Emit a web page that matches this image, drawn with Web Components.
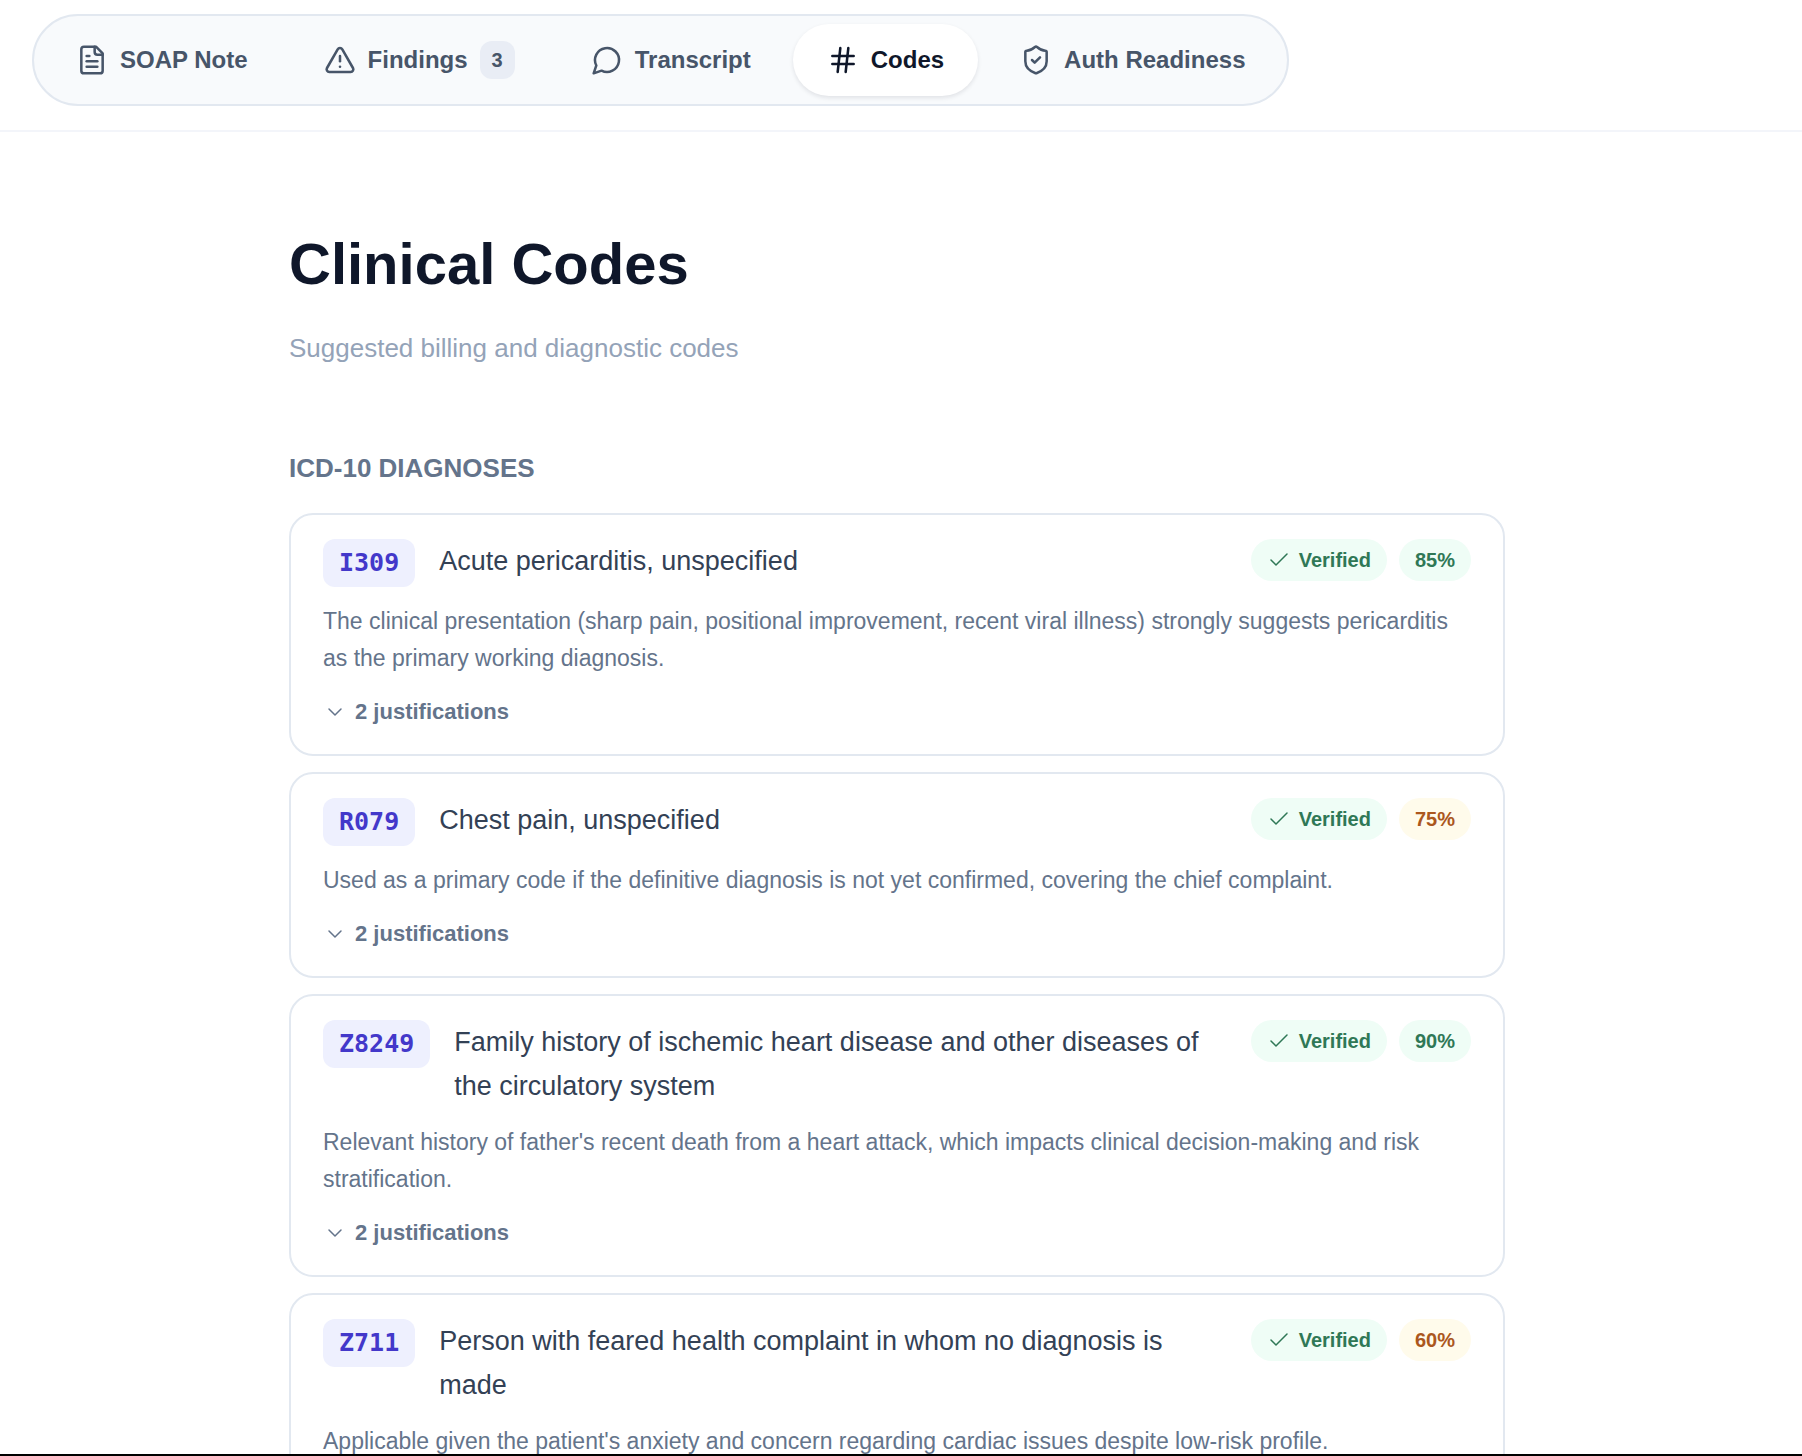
<!DOCTYPE html>
<html lang="en">
<head>
<meta charset="utf-8">
<meta name="viewport" content="width=device-width, initial-scale=1">
<title>Clinical Codes</title>
<style>
  html, body { margin: 0; height: 100%; }
  body {
    font-family: "Liberation Sans", Arial, sans-serif;
    color: #334155;
    background: #fff;
    --slate-50: #f8fafc;
    --slate-200: #e2e8f0;
    --slate-400: #94a3b8;
    --slate-500: #64748b;
    --slate-600: #475569;
    --slate-700: #334155;
    --slate-900: #0f172a;
  }
</style>
</head>
<body>
<codes-app>
  <tab-bar slot="header">
    <tab-item icon="file">SOAP Note</tab-item>
    <tab-item icon="alert" count="3">Findings</tab-item>
    <tab-item icon="message">Transcript</tab-item>
    <tab-item icon="hash" active>Codes</tab-item>
    <tab-item icon="shield">Auth Readiness</tab-item>
  </tab-bar>

  <page-heading>
    Clinical Codes
    <span slot="subtitle">Suggested billing and diagnostic codes</span>
  </page-heading>

  <code-section heading="ICD-10 DIAGNOSES">
    <code-card code="I309" confidence="85" justifications="2">
      <span slot="title">Acute pericarditis, unspecified</span>
      The clinical presentation (sharp pain, positional improvement, recent viral illness) strongly suggests pericarditis as the primary working diagnosis.
    </code-card>
    <code-card code="R079" confidence="75" justifications="2">
      <span slot="title">Chest pain, unspecified</span>
      Used as a primary code if the definitive diagnosis is not yet confirmed, covering the chief complaint.
    </code-card>
    <code-card code="Z8249" confidence="90" justifications="2">
      <span slot="title">Family history of ischemic heart disease and other diseases of the circulatory system</span>
      Relevant history of father's recent death from a heart attack, which impacts clinical decision-making and risk stratification.
    </code-card>
    <code-card code="Z711" confidence="60" justifications="2">
      <span slot="title">Person with feared health complaint in whom no diagnosis is made</span>
      Applicable given the patient's anxiety and concern regarding cardiac issues despite low-risk profile.
    </code-card>
  </code-section>
</codes-app>

<script>
  const ICONS = {
    file: '<path d="M15 2H6a2 2 0 0 0-2 2v16a2 2 0 0 0 2 2h12a2 2 0 0 0 2-2V7Z"/><path d="M14 2v4a2 2 0 0 0 2 2h4"/><path d="M10 9H8"/><path d="M16 13H8"/><path d="M16 17H8"/>',
    alert: '<path d="m21.73 18-8-14a2 2 0 0 0-3.48 0l-8 14A2 2 0 0 0 4 21h16a2 2 0 0 0 1.73-3"/><path d="M12 9v4"/><path d="M12 17h.01"/>',
    message: '<path d="M7.9 20A9 9 0 1 0 4 16.1L2 22Z"/>',
    hash: '<path d="M4 9h16"/><path d="M4 15h16"/><path d="M10 3 8 21"/><path d="m16 3-2 18"/>',
    shield: '<path d="M20 13c0 5-3.500 7.500-7.660 8.950a1 1 0 0 1-.67-.01C7.500 20.500 4 18 4 13V6a1 1 0 0 1 1-1c2 0 4.500-1.200 6.240-2.720a1.170 1.170 0 0 1 1.520 0C14.510 3.810 17 5 19 5a1 1 0 0 1 1 1z"/><path d="m9 12 2 2 4-4"/>',
    check: '<path d="M20 6 9 17l-5-5"/>',
    chevron: '<path d="m6 9 6 6 6-6"/>'
  };

  class BaseElement extends HTMLElement {
    connectedCallback() {
      if (this.shadowRoot) return;
      this.attachShadow({ mode: 'open' }).innerHTML = this.render();
    }
  }

  customElements.define('ui-icon', class extends BaseElement {
    render() {
      return `
        <style>
          :host { display: block; flex: none; width: 24px; height: 24px; }
          svg { display: block; width: 100%; height: 100%; fill: none; stroke: currentColor;
                stroke-width: var(--icon-stroke, 1.5); stroke-linecap: round; stroke-linejoin: round; }
        </style>
        <svg viewBox="0 0 24 24" aria-hidden="true">${ICONS[this.getAttribute('name')]}</svg>`;
    }
  });

  customElements.define('codes-app', class extends BaseElement {
    render() {
      return `
        <style>
          :host { display: flex; flex-direction: column; box-sizing: border-box; height: 100vh;
                  overflow: hidden; border-bottom: 2px solid #000; }
          header { flex: none; padding: 14px 32px 24px; border-bottom: 2px solid #f3f5fa; }
          main { flex: 1; min-height: 0; overflow: hidden; padding: 96px 40px 0 32px; }
          .column { max-width: 1216px; margin: 0 auto; }
        </style>
        <header><slot name="header"></slot></header>
        <main><div class="column"><slot></slot></div></main>`;
    }
  });

  customElements.define('tab-bar', class extends BaseElement {
    render() {
      return `
        <style>
          :host { display: flex; }
          nav { display: flex; gap: 8px; padding: 8px; border: 2px solid var(--slate-200);
                border-radius: 46px; background: var(--slate-50); }
        </style>
        <nav aria-label="Encounter"><slot></slot></nav>`;
    }
  });

  customElements.define('tab-item', class extends BaseElement {
    render() {
      const count = this.getAttribute('count');
      return `
        <style>
          :host { display: block; --icon-stroke: 1.9; }
          button { display: flex; align-items: center; gap: 12px; height: 72px; padding: 0 34px;
                   border: 0; border-radius: 36px; background: none; color: var(--slate-600);
                   font: bold 24px/32px "Liberation Sans", Arial, sans-serif; white-space: nowrap; cursor: pointer; }
          :host([active]) button { background: #fff; color: var(--slate-900);
                   box-shadow: 0 2px 4px rgba(15, 23, 42, .1); }
          ui-icon { width: 32px; height: 32px; }
          .count { padding: 0 12px; border-radius: 12px; background: #e9edf5; font-size: 20px; line-height: 38px; }
        </style>
        <button type="button" ${this.hasAttribute('active') ? 'aria-current="page"' : ''}>
          <ui-icon name="${this.getAttribute('icon')}"></ui-icon>
          <slot></slot>
          ${count ? `<span class="count">${count}</span>` : ''}
        </button>`;
    }
  });

  customElements.define('page-heading', class extends BaseElement {
    render() {
      return `
        <style>
          :host { display: block; }
          h1 { margin: 0; color: var(--slate-900); font-size: 58px; line-height: 72px; font-weight: bold; }
          p { margin: 28px 0 0; color: var(--slate-400); font-size: 26px; line-height: 40px; }
        </style>
        <h1><slot></slot></h1>
        <p><slot name="subtitle"></slot></p>`;
    }
  });

  customElements.define('code-section', class extends BaseElement {
    render() {
      return `
        <style>
          :host { display: block; margin-top: 80px; }
          h2 { margin: 0 0 25px; color: var(--slate-500); font-size: 26px; line-height: 40px; font-weight: bold; }
          .list { display: flex; flex-direction: column; gap: 16px; }
        </style>
        <h2>${this.getAttribute('heading')}</h2>
        <div class="list"><slot></slot></div>`;
    }
  });

  customElements.define('status-pill', class extends BaseElement {
    render() {
      return `
        <style>
          :host { display: flex; align-items: center; gap: 8px; padding: 0 16px; border-radius: 21px;
                  background: #effdf6; color: #2f7856; font-size: 20px; line-height: 42px; font-weight: bold; }
          :host([tone="warn"]) { background: #fffbeb; color: #ab571d; }
        </style>
        ${this.hasAttribute('icon') ? `<ui-icon name="${this.getAttribute('icon')}"></ui-icon>` : ''}
        <slot></slot>`;
    }
  });

  customElements.define('code-card', class extends BaseElement {
    render() {
      const confidence = Number(this.getAttribute('confidence'));
      return `
        <style>
          :host { display: block; padding: 24px 32px; border: 2px solid var(--slate-200); border-radius: 24px; background: #fff; }
          .head { display: flex; align-items: flex-start; gap: 24px; }
          code { padding: 0 16px; border-radius: 12px; background: #eef0fe; color: #4338ca;
                 font: bold 25px/48px "DejaVu Sans Mono", monospace; }
          h3 { flex: 1; margin: 0; color: var(--slate-700); font-size: 27px; line-height: 44px; font-weight: normal; }
          .pills { display: flex; gap: 12px; }
          p { margin: 16px 0; color: var(--slate-500); font-size: 23px; line-height: 37px; }
          button { display: flex; align-items: center; gap: 8px; height: 37px; padding: 0; border: 0; background: none;
                   color: var(--slate-500); font: bold 22px/37px "Liberation Sans", Arial, sans-serif; cursor: pointer; }
        </style>
        <article>
          <div class="head">
            <code>${this.getAttribute('code')}</code>
            <h3><slot name="title"></slot></h3>
            <div class="pills">
              <status-pill icon="check">Verified</status-pill>
              <status-pill tone="${confidence >= 80 ? 'good' : 'warn'}">${confidence}%</status-pill>
            </div>
          </div>
          <p><slot></slot></p>
          <button type="button" aria-expanded="false">
            <ui-icon name="chevron"></ui-icon>${this.getAttribute('justifications')} justifications
          </button>
        </article>`;
    }
  });
</script>
</body>
</html>
